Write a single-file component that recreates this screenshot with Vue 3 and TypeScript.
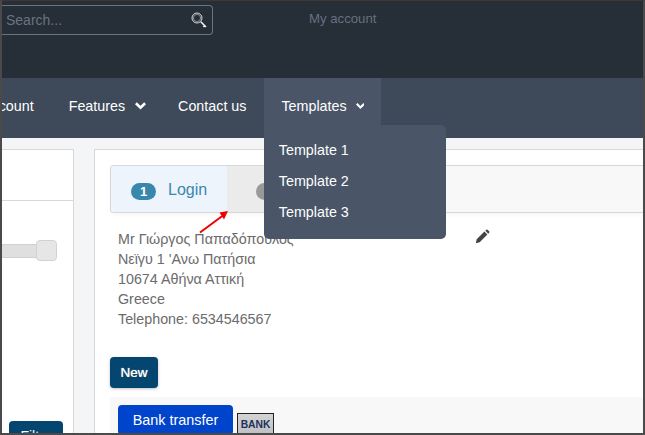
<script setup lang="ts">
const address: string[] = [
  'Mr Γιώργος Παπαδόπουλος',
  'Νεϊγυ 1 \'Ανω Πατήσια',
  '10674 Αθήνα Αττική',
  'Greece',
  'Telephone: 6534546567',
]
const templates: string[] = ['Template 1', 'Template 2', 'Template 3']
</script>

<template>
  <div class="frame">
    <header class="topbar">
      <div class="search">
        <span class="search-text">Search...</span>
        <svg class="search-icon" width="17" height="17" viewBox="0 0 17 17" fill="none">
          <circle cx="6" cy="6" r="5" stroke="#dcdcdc" stroke-width="1" />
          <circle cx="6" cy="6" r="3.6" stroke="#8a8f96" stroke-width="1" />
          <path d="M9.8 9.8 15 15M12.4 15l1.6-1.6" stroke="#f2f2f2" stroke-width="1.6" />
        </svg>
      </div>
      <span class="account">My account</span>
    </header>

    <nav class="nav">
      <span class="nav-item first">Account</span>
      <span class="nav-item features">Features
        <svg class="chev" width="11" height="8" viewBox="0 0 11 8"><path d="M0.9 1.3 5.5 5.8 10.1 1.3" fill="none" stroke="#fff" stroke-width="2.6" /></svg>
      </span>
      <span class="nav-item contact">Contact us</span>
      <span class="nav-item templates">Templates
        <svg class="chev" width="11" height="8" viewBox="0 0 11 8"><path d="M0.9 1.3 5.5 5.8 10.1 1.3" fill="none" stroke="#fff" stroke-width="2.6" /></svg>
        <ul class="menu">
          <li v-for="t in templates" :key="t">{{ t }}</li>
        </ul>
      </span>
    </nav>

    <main class="content">
      <aside class="side">
        <div class="side-head"></div>
        <div class="slider"><span class="handle"></span></div>
        <button class="filter">Filter</button>
      </aside>

      <section class="panel">
        <div class="wizard">
          <div class="step active"><span class="badge">1</span><span class="step-label">Login</span></div>
          <div class="step second"><span class="badge grey">2</span></div>
          <div class="step rest"></div>
          <svg class="arrow" width="30" height="24" viewBox="0 0 30 24" fill="none">
            <path d="M1 22.5 26 4" stroke="#f00000" stroke-width="2" />
            <path d="M29 1 20.5 2.5 25 9.5Z" fill="#f00000" />
          </svg>
        </div>

        <div class="address">
          <div class="lines">
            <div v-for="l in address" :key="l">{{ l }}</div>
          </div>
          <svg class="pencil" width="15" height="15" viewBox="0 0 15 15">
            <path d="M0.8 14.2 1.7 10.3 9.4 2.6 12.4 5.6 4.7 13.3Z M10.3 1.7 11.4 0.7Q12 0.2 12.6 0.7L14.3 2.4Q14.8 3 14.3 3.6L13.3 4.7Z" fill="#444" />
          </svg>
        </div>

        <button class="new">New</button>

        <div class="payment">
          <button class="bank">Bank transfer</button>
          <span class="bank-logo">BANK</span>
        </div>
      </section>
    </main>
  </div>
</template>

<style>
html, body { margin: 0; padding: 0; overflow: hidden; }
</style>

<style scoped>
.frame {
  box-sizing: border-box;
  width: 645px;
  height: 435px;
  overflow: hidden;
  display: flex;
  flex-direction: column;
  border-left: 2px solid #4a4a4a;
  border-right: 2px solid #4a4a4a;
  border-bottom: 2px solid #4a4a4a;
  border-top: 1px solid #3d3835;
  font-family: "Liberation Sans", Arial, sans-serif;
  background: #f4f5f7;
}
.topbar {
  flex: 0 0 77px;
  background: #262e37;
  display: flex;
  align-items: flex-start;
}
.search {
  box-sizing: border-box;
  flex: 0 0 212px;
  height: 30px;
  margin: 4px 0 0 -1px;
  padding: 0 4px 0 5px;
  border: 1px solid #6b7280;
  border-left: 0;
  border-radius: 0 4px 4px 0;
  display: flex;
  align-items: center;
  justify-content: space-between;
}
.search-text { font-size: 14px; color: #6b7280; }
.search-icon { display: block; }
.account {
  margin: 10px 0 0 96px;
  font-size: 13.2px;
  line-height: 15px;
  color: #667080;
}
.nav {
  flex: 0 0 60px;
  background: #3e4a5a;
  display: flex;
  align-items: stretch;
  color: #fff;
  font-size: 14.3px;
  position: relative;
  z-index: 2;
  margin-left: -1px;
}
.nav-item {
  display: flex;
  align-items: center;
  gap: 10px;
  height: 56px;
  white-space: nowrap;
}
.first { margin-left: -19px; }
.features { margin-left: 35px; }
.contact { margin-left: 32px; }
.templates {
  position: relative;
  margin-left: 18px;
  padding: 0 17px 4px;
  width: 117px;
  box-sizing: border-box;
  height: 60px;
  background: #4a5567;
  gap: 9px;
}
.chev { display: block; }
.menu {
  position: absolute;
  left: 0;
  top: 47px;
  box-sizing: border-box;
  width: 182px;
  height: 114px;
  margin: 0;
  padding: 10px 15px 10px 15px;
  list-style: none;
  background: #4a5567;
  border-radius: 0 5px 5px 5px;
}
.menu li { height: 31px; line-height: 31px; margin-left: -0.6px; }
.content {
  flex: 1;
  min-height: 0;
  display: flex;
  align-items: flex-start;
  padding-top: 11px;
  gap: 20px;
}
.side {
  box-sizing: border-box;
  flex: 0 0 72px;
  height: 300px;
  background: #fff;
  border: 1px solid #d8d8d8;
  border-left: 0;
  position: relative;
}
.side-head { height: 50px; border-bottom: 1px solid #d8d8d8; }
.slider {
  margin-top: 43px;
  height: 14px;
  width: 40px;
  background: #dfdfdf;
  border: 1px solid #d0d0d0;
  border-left: 0;
  box-sizing: border-box;
  position: relative;
}
.handle {
  position: absolute;
  right: -16px;
  top: -5px;
  box-sizing: border-box;
  width: 21px;
  height: 21px;
  background: #e6e6e6;
  border: 1px solid #d2d2d2;
  border-radius: 4px;
}
.filter {
  position: absolute;
  left: 7px;
  top: 271px;
  width: 54px;
  height: 30px;
  border: 0;
  border-radius: 4px;
  background: #04466f;
  color: #fff;
  font: 14px "Liberation Sans", Arial, sans-serif;
  padding: 0;
}
.panel {
  box-sizing: border-box;
  flex: 1;
  height: 300px;
  background: #fff;
  border: 1px solid #d8d8d8;
  border-right: 0;
  padding: 15px 0 0 15px;
  min-width: 0;
}
.wizard {
  position: relative;
  box-sizing: border-box;
  height: 48px;
  display: flex;
  border: 1px solid #d8d8d8;
  border-right: 0;
  border-radius: 4px 0 0 4px;
  box-shadow: 0 2px 4px rgba(0, 0, 0, 0.04);
}
.step { display: flex; align-items: center; }
.active {
  box-sizing: border-box;
  width: 116px;
  background: #eef4fb;
  padding-left: 20px;
  border-radius: 4px 0 0 4px;
}
.second {
  box-sizing: border-box;
  width: 90px;
  background: #ebebeb;
  padding-left: 29px;
}
.rest { flex: 1; background: #f8f8f8; }
.badge {
  width: 25px;
  height: 17px;
  margin-top: 5px;
  border-radius: 9px;
  background: #3a87ad;
  color: #fff;
  font-size: 13px;
  font-weight: 700;
  text-align: center;
  line-height: 17px;
}
.grey { background: #999; }
.step-label {
  margin: 2px 0 0 12px;
  font-size: 16px;
  color: #3a87ad;
}
.arrow {
  position: absolute;
  left: 88px;
  top: 44px;
}
.address {
  display: flex;
  margin: 16px 0 0 8px;
  font-size: 14.3px;
  line-height: 20px;
  color: #6b6b6b;
  height: 128px;
  position: relative;
}
.lines { width: 357px; }
.new {
  display: block;
  width: 48px;
  height: 31px;
  padding: 0;
  border: 0;
  border-radius: 4px;
  background: #04466f;
  color: #fff;
  font: 13.5px "Liberation Sans", Arial, sans-serif;
  text-shadow: 0 0 1px #fff, 0 1px 1px rgba(0, 0, 0, 0.4);
  box-shadow: 0 1px 3px rgba(0, 0, 0, 0.25);
}
.payment {
  margin-top: 9px;
  background: #f8f8f8;
  padding: 8px;
  display: flex;
  align-items: flex-start;
  gap: 4px;
  height: 60px;
}
.bank {
  flex: 0 0 115px;
  height: 30px;
  padding: 0;
  border: 0;
  border-radius: 4px;
  background: #0044cc;
  color: #fff;
  font: 14.4px "Liberation Sans", Arial, sans-serif;
}
.bank-logo {
  box-sizing: border-box;
  margin-top: 8px;
  flex: 0 0 37px;
  height: 28px;
  border: 1px solid #222;
  background: linear-gradient(#d4d4d4, #b8bac0);
  color: #22305a;
  font-size: 10.3px;
  font-weight: 700;
  text-align: center;
  line-height: 22px;
}
</style>
